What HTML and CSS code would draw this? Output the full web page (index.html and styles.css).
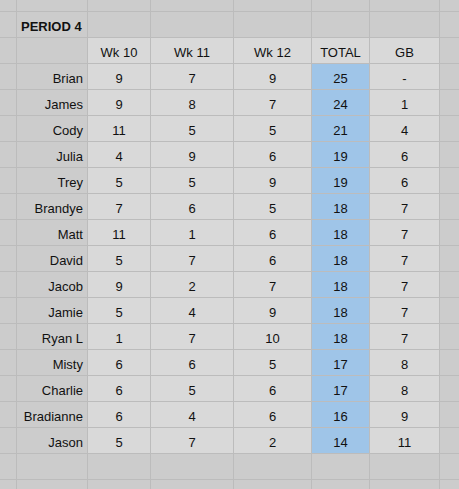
FILE: index.html
```html
<!DOCTYPE html>
<html>
<head>
<meta charset="utf-8">
<link rel="stylesheet" href="styles.css">
</head>
<body>
<div class="sheet">
  <div class="c"></div><div class="c"></div><div class="c"></div><div class="c"></div><div class="c"></div><div class="c"></div><div class="c"></div><div class="c"></div>

  <div class="c"></div><div class="c title">PERIOD 4</div><div class="c"></div><div class="c"></div><div class="c"></div><div class="c"></div><div class="c"></div><div class="c"></div>

  <div class="c"></div><div class="c"></div><div class="c lt">Wk 10</div><div class="c lt">Wk 11</div><div class="c lt">Wk 12</div><div class="c lt">TOTAL</div><div class="c lt">GB</div><div class="c"></div>

  <div class="c"></div><div class="c name">Brian</div><div class="c lt">9</div><div class="c lt">7</div><div class="c lt">9</div><div class="c tot">25</div><div class="c lt">-</div><div class="c"></div>
  <div class="c"></div><div class="c name">James</div><div class="c lt">9</div><div class="c lt">8</div><div class="c lt">7</div><div class="c tot">24</div><div class="c lt">1</div><div class="c"></div>
  <div class="c"></div><div class="c name">Cody</div><div class="c lt">11</div><div class="c lt">5</div><div class="c lt">5</div><div class="c tot">21</div><div class="c lt">4</div><div class="c"></div>
  <div class="c"></div><div class="c name">Julia</div><div class="c lt">4</div><div class="c lt">9</div><div class="c lt">6</div><div class="c tot">19</div><div class="c lt">6</div><div class="c"></div>
  <div class="c"></div><div class="c name">Trey</div><div class="c lt">5</div><div class="c lt">5</div><div class="c lt">9</div><div class="c tot">19</div><div class="c lt">6</div><div class="c"></div>
  <div class="c"></div><div class="c name">Brandye</div><div class="c lt">7</div><div class="c lt">6</div><div class="c lt">5</div><div class="c tot">18</div><div class="c lt">7</div><div class="c"></div>
  <div class="c"></div><div class="c name">Matt</div><div class="c lt">11</div><div class="c lt">1</div><div class="c lt">6</div><div class="c tot">18</div><div class="c lt">7</div><div class="c"></div>
  <div class="c"></div><div class="c name">David</div><div class="c lt">5</div><div class="c lt">7</div><div class="c lt">6</div><div class="c tot">18</div><div class="c lt">7</div><div class="c"></div>
  <div class="c"></div><div class="c name">Jacob</div><div class="c lt">9</div><div class="c lt">2</div><div class="c lt">7</div><div class="c tot">18</div><div class="c lt">7</div><div class="c"></div>
  <div class="c"></div><div class="c name">Jamie</div><div class="c lt">5</div><div class="c lt">4</div><div class="c lt">9</div><div class="c tot">18</div><div class="c lt">7</div><div class="c"></div>
  <div class="c"></div><div class="c name">Ryan L</div><div class="c lt">1</div><div class="c lt">7</div><div class="c lt">10</div><div class="c tot">18</div><div class="c lt">7</div><div class="c"></div>
  <div class="c"></div><div class="c name">Misty</div><div class="c lt">6</div><div class="c lt">6</div><div class="c lt">5</div><div class="c tot">17</div><div class="c lt">8</div><div class="c"></div>
  <div class="c"></div><div class="c name">Charlie</div><div class="c lt">6</div><div class="c lt">5</div><div class="c lt">6</div><div class="c tot">17</div><div class="c lt">8</div><div class="c"></div>
  <div class="c"></div><div class="c name">Bradianne</div><div class="c lt">6</div><div class="c lt">4</div><div class="c lt">6</div><div class="c tot">16</div><div class="c lt">9</div><div class="c"></div>
  <div class="c"></div><div class="c name">Jason</div><div class="c lt">5</div><div class="c lt">7</div><div class="c lt">2</div><div class="c tot">14</div><div class="c lt">11</div><div class="c"></div>

  <div class="c"></div><div class="c"></div><div class="c"></div><div class="c"></div><div class="c"></div><div class="c"></div><div class="c"></div><div class="c"></div>
  <div class="c"></div><div class="c"></div><div class="c"></div><div class="c"></div><div class="c"></div><div class="c"></div><div class="c"></div><div class="c"></div>
</div>
</body>
</html>
```

FILE: styles.css
```css
html, body {
  margin: 0;
  padding: 0;
  background: #cccccc;
  overflow: hidden;
}
.sheet {
  display: grid;
  grid-template-columns: 16px 70px 62px 82px 77px 57px 69px 1fr;
  grid-template-rows: 11px repeat(18, 25px);
  gap: 1px;
  background: #bcbcbc;
  width: 459px;
  height: 489px;
  overflow: hidden;
  font-family: "Liberation Sans", Arial, sans-serif;
  font-size: 13px;
  color: #111;
}
.c {
  background: #cccccc;
  display: flex;
  align-items: center;
  justify-content: center;
  padding-top: 3px;
  box-sizing: border-box;
  white-space: nowrap;
  overflow: hidden;
}
.title {
  justify-content: flex-start;
  padding-left: 4px;
  font-weight: bold;
}
.name {
  justify-content: flex-end;
  padding-right: 4px;
}
.lt {
  background: #d9d9d9;
}
.tot {
  background: #9fc5e8;
}
```
